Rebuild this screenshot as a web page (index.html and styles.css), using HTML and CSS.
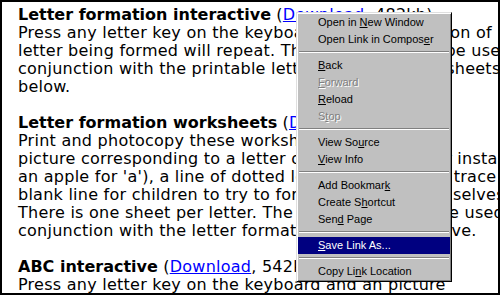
FILE: index.html
```html
<!DOCTYPE html>
<html lang="en">
<head>
    <meta charset="UTF-8">
    <title>Literacy resources</title>
    <link rel="stylesheet" href="styles.css">
</head>
<body>

<div class="frame">
    <div class="page">
        <p>
            <b>Letter formation interactive</b> (<a href="#">Download</a>, 482kb)<br>
            Press any letter key on the keyboard and an animation of<br>
            letter being formed will repeat. The animation may be used in<br>
            conjunction with the printable letter formation worksheets<br>
            below.
        </p>
        <p>
            <b>Letter formation worksheets</b> (<a href="#">Download</a>, 230kb)<br>
            Print and photocopy these worksheets to contain a<br>
            picture corresponding to a letter of the alphabet (for instance<br>
            an apple for 'a'), a line of dotted letters for pupils to trace<br>
            blank line for children to try to form the letters themselves.<br>
            There is one sheet per letter. The worksheets may be used in<br>
            conjunction with the letter formation interactive above.
        </p>
        <p>
            <b>ABC interactive</b> (<a href="#">Download</a>, 542kb)<br>
            Press any letter key on the keyboard and an picture
        </p>
    </div>

    <!-- Context menu for the link -->
    <div class="menu">
        <div class="item">Open in <u>N</u>ew Window</div>
        <div class="item">Open Link in Compos<u>e</u>r</div>
        <div class="sep"></div>
        <div class="item"><u>B</u>ack</div>
        <div class="item off"><u>F</u>orward</div>
        <div class="item"><u>R</u>eload</div>
        <div class="item off">S<u>t</u>op</div>
        <div class="sep"></div>
        <div class="item">View So<u>u</u>rce</div>
        <div class="item"><u>V</u>iew Info</div>
        <div class="sep"></div>
        <div class="item">Add Bookmar<u>k</u></div>
        <div class="item">Create S<u>h</u>ortcut</div>
        <div class="item">Sen<u>d</u> Page</div>
        <div class="sep"></div>
        <div class="item active"><u>S</u>ave Link As...</div>
        <div class="sep"></div>
        <div class="item">Copy Li<u>n</u>k Location</div>
    </div>
</div>

</body>
</html>
```

FILE: styles.css
```css
* {
    box-sizing: border-box;
}

body {
    margin: 0;
    background: #fff;
}

.frame {
    position: relative;
    width: 500px;
    height: 295px;
    border: 2px solid #000;
    overflow: hidden;
    background: #fff;
}

.page {
    padding: 4px 0 0 16px;
    font-family: "DejaVu Sans", Verdana, sans-serif;
    font-size: 16px;
    line-height: 18px;
    letter-spacing: 0.25px;
    color: #000;
    white-space: nowrap;
}

.page p {
    margin: 0 0 18px;
}

.page b {
    letter-spacing: 0;
}

.page a {
    color: #00f;
}

/* Windows style popup menu */
.menu {
    position: absolute;
    left: 294px;
    top: 10px;
    width: 156px;
    padding: 1px;
    background: #c0c0c0;
    border: 1px solid;
    border-color: #dfdfdf #000 #000 #dfdfdf;
    box-shadow: inset 1px 1px #fff, inset -1px -1px #808080;
    font-family: "Liberation Sans", Arial, sans-serif;
    font-size: 11px;
    color: #000;
}

.item {
    height: 17px;
    line-height: 17px;
    padding-left: 20px;
    white-space: nowrap;
}

.item.off {
    color: #808080;
    text-shadow: 1px 1px #fff;
}

.item.active {
    background: #000080;
    color: #fff;
}

.sep {
    height: 2px;
    margin: 3px 1px 4px;
    border-top: 1px solid #808080;
    border-bottom: 1px solid #fff;
}
```
